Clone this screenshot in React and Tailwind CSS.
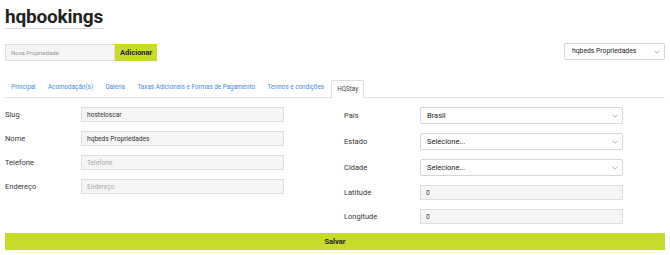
import React, { useState } from "react";

const tabs = [
  "Principal",
  "Acomodação(s)",
  "Galeria",
  "Taxas Adicionais e Formas de Pagamento",
  "Termos e condições",
  "HQStay",
];

const Chevron = () => (
  <svg className="absolute right-[4px] top-1/2 -translate-y-1/2" width="6" height="4" viewBox="0 0 6 4" fill="none">
    <path d="M0.5 0.7 L3 3.2 L5.5 0.7" stroke="#999" strokeWidth="0.8" />
  </svg>
);

const TextField = ({ label, value, placeholder }) => (
  <div className="flex items-center h-[15px]">
    <label className="w-[76px] text-[7.5px] text-[#333]">{label}</label>
    <input
      className="w-[203px] h-[15px] bg-[#f5f5f5] border border-[#dedede] px-[5px] text-[6.6px] text-[#333] placeholder:text-[#aaa] outline-none"
      defaultValue={value}
      placeholder={placeholder}
    />
  </div>
);

const SelectField = ({ label, value }) => (
  <div className="flex items-center h-[17px]">
    <label className="w-[76px] text-[7.5px] text-[#333]">{label}</label>
    <div className="relative w-[203px] h-[17px] bg-white border border-[#d6d6d6] rounded-[2px] px-[6px] flex items-center text-[7.5px] text-[#222]">
      {value}
      <Chevron />
    </div>
  </div>
);

const App = () => {
  const [active] = useState("HQStay");

  return (
    <div className="w-[670px] h-[255px] bg-white px-[5px] font-['Roboto',sans-serif] text-[#333] overflow-hidden">
      <div className="pt-[7px] h-[29px] flex">
        <h1 className="text-[19px] leading-[20px] font-bold tracking-[-0.2px] text-[#222] border-b border-[#ddd] pb-[1px] pr-[1px]">
          hqbookings
        </h1>
      </div>

      <div className="flex items-start justify-between mt-[15px]">
        <div className="flex">
          <input
            className="w-[110px] h-[17px] bg-[#f5f5f5] border border-[#dedede] px-[5px] text-[6px] placeholder:text-[#999] outline-none"
            placeholder="Nova Propriedade"
          />
          <button className="h-[17px] px-[5px] bg-[#c8da2b] text-[7.5px] font-bold text-[#222]">
            Adicionar
          </button>
        </div>
        <div className="relative w-[101px] h-[17px] mt-[-1px] bg-white border border-[#d6d6d6] rounded-[2px] pl-[7px] flex items-center text-[6.8px] text-[#222]">
          hqbeds Propriedades
          <Chevron />
        </div>
      </div>

      <div className="flex items-end mt-[19px] h-[18px] border-b border-[#e3e3e3]">
        {tabs.map((t) => (
          <div
            key={t}
            className={
              t === active
                ? "h-[18px] px-[5px] flex items-center text-[6.3px] text-[#444] bg-white border border-b-0 border-[#ddd] rounded-t-[2px] mb-[-1px] ml-[1px]"
                : "h-[18px] px-[6.2px] flex items-center text-[6.3px] text-[#3d8fe0]"
            }
          >
            {t}
          </div>
        ))}
      </div>

      <div className="flex mt-[9px]">
        <div className="w-[339px] flex flex-col gap-[9px]">
          <TextField label="Slug" value="hosteloscar" />
          <TextField label="Nome" value="hqbeds Propriedades" />
          <TextField label="Telefone" placeholder="Telefone" />
          <TextField label="Endereço" placeholder="Endereço" />
        </div>
        <div className="flex flex-col">
          <SelectField label="País" value="Brasil" />
          <div className="h-[9px]" />
          <SelectField label="Estado" value="Selecione..." />
          <div className="h-[9px]" />
          <SelectField label="Cidade" value="Selecione..." />
          <div className="h-[9px]" />
          <TextField label="Latitude" value="0" />
          <div className="h-[9px]" />
          <TextField label="Longitude" value="0" />
        </div>
      </div>

      <button className="w-full h-[17px] mt-[9px] bg-[#c8da2b] text-[7.5px] font-bold text-[#222]">
        Salvar
      </button>
    </div>
  );
};

export default App;
